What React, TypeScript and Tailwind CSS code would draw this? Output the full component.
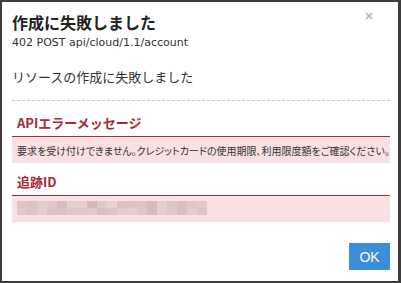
const jp = { fontFamily: '"Noto Sans CJK JP", "Liberation Sans", sans-serif' }

const blur = [
  ['#dcc4c8', '#d9c3c7', '#e0cdd0', '#dfc8cc', '#d7bdc2', '#e3ced1', '#e4d0d3', '#d3b8bd', '#dfc8cc', '#e6d2d5', '#d9c1c6', '#dbc4c8', '#dcc4c8', '#d5bbc0', '#e2cdd0', '#dcc5c9', '#d8bfc4', '#dec8cc', '#e0cacd'],
  ['#e0c9cd', '#dcc3c7', '#e2cdd0', '#dbc3c7', '#dac1c5', '#dec7cb', '#dec7cb', '#e0c9cd', '#d9c0c5', '#dcc4c8', '#e1cbce', '#e3ced1', '#dfc8cc', '#d6bcc1', '#e3ced1', '#dec7cb', '#d7bec3', '#e2cccf', '#dcc4c8'],
]

export default function App() {
  return (
    <div className="flex h-[283px] w-[401px] bg-[#3c3c3c] pb-[2px] pl-[2px] pr-[3px] pt-[2px]" style={jp}>
      <div className="flex flex-1 flex-col bg-white pl-[10px] pr-[8px]">
        <div className="relative pt-[9px]">
          <h1 className="text-[16px] font-bold leading-[22px] text-[#222]">作成に失敗しました</h1>
          <p className="mt-[3px] text-[11px] leading-[14px] text-[#333]" style={{ fontFamily: '"DejaVu Sans", sans-serif' }}>
            402 POST api/cloud/1.1/account
          </p>
          <button type="button" className="absolute right-[17px] top-[10px] text-[#b0b0b0]">
            <svg width="8" height="8" viewBox="0 0 8 8">
              <path d="M1 1L7 7M7 1L1 7" stroke="currentColor" strokeWidth="1.6" />
            </svg>
          </button>
        </div>
        <p className="mt-[17px] text-[13px] leading-[20px] text-[#333]">リソースの作成に失敗しました</p>
        <div className="mt-[13px] border-t border-dashed border-[#c8c8c8]" />
        <h2 className="mt-[12px] pl-[5px] text-[13px] font-bold leading-[20px] text-[#a72a3d]">APIエラーメッセージ</h2>
        <div className="mt-[3px] h-[27px] whitespace-nowrap border-t border-[#a72a3d] bg-[#f8e0e3] pl-[5px] pt-[7px] text-[10px] leading-[13px] text-[#333]" style={{ fontFeatureSettings: '"palt"' }}>
          要求を受け付けできません。クレジットカードの使用期限、利用限度額をご確認ください。
        </div>
        <h2 className="mt-[9px] pl-[5px] text-[13px] font-bold leading-[20px] text-[#a72a3d]">追跡ID</h2>
        <div className="mt-[3px] h-[27px] border-t border-[#a72a3d] bg-[#f8e0e3] pl-[5px] pt-[5px]">
          {blur.map((row, i) => (
            <div key={i} className="flex h-[7px]">
              {row.map((c, j) => (
                <span key={j} className="h-[7px] w-[10px]" style={{ backgroundColor: c }} />
              ))}
            </div>
          ))}
        </div>
        <div className="mt-auto flex justify-end pb-[11px]">
          <button type="button" className="h-[27px] w-[41px] bg-[#3a8fd8] text-[14px] leading-none text-white" style={{ fontFamily: '"Liberation Sans", sans-serif' }}>
            OK
          </button>
        </div>
      </div>
    </div>
  )
}
